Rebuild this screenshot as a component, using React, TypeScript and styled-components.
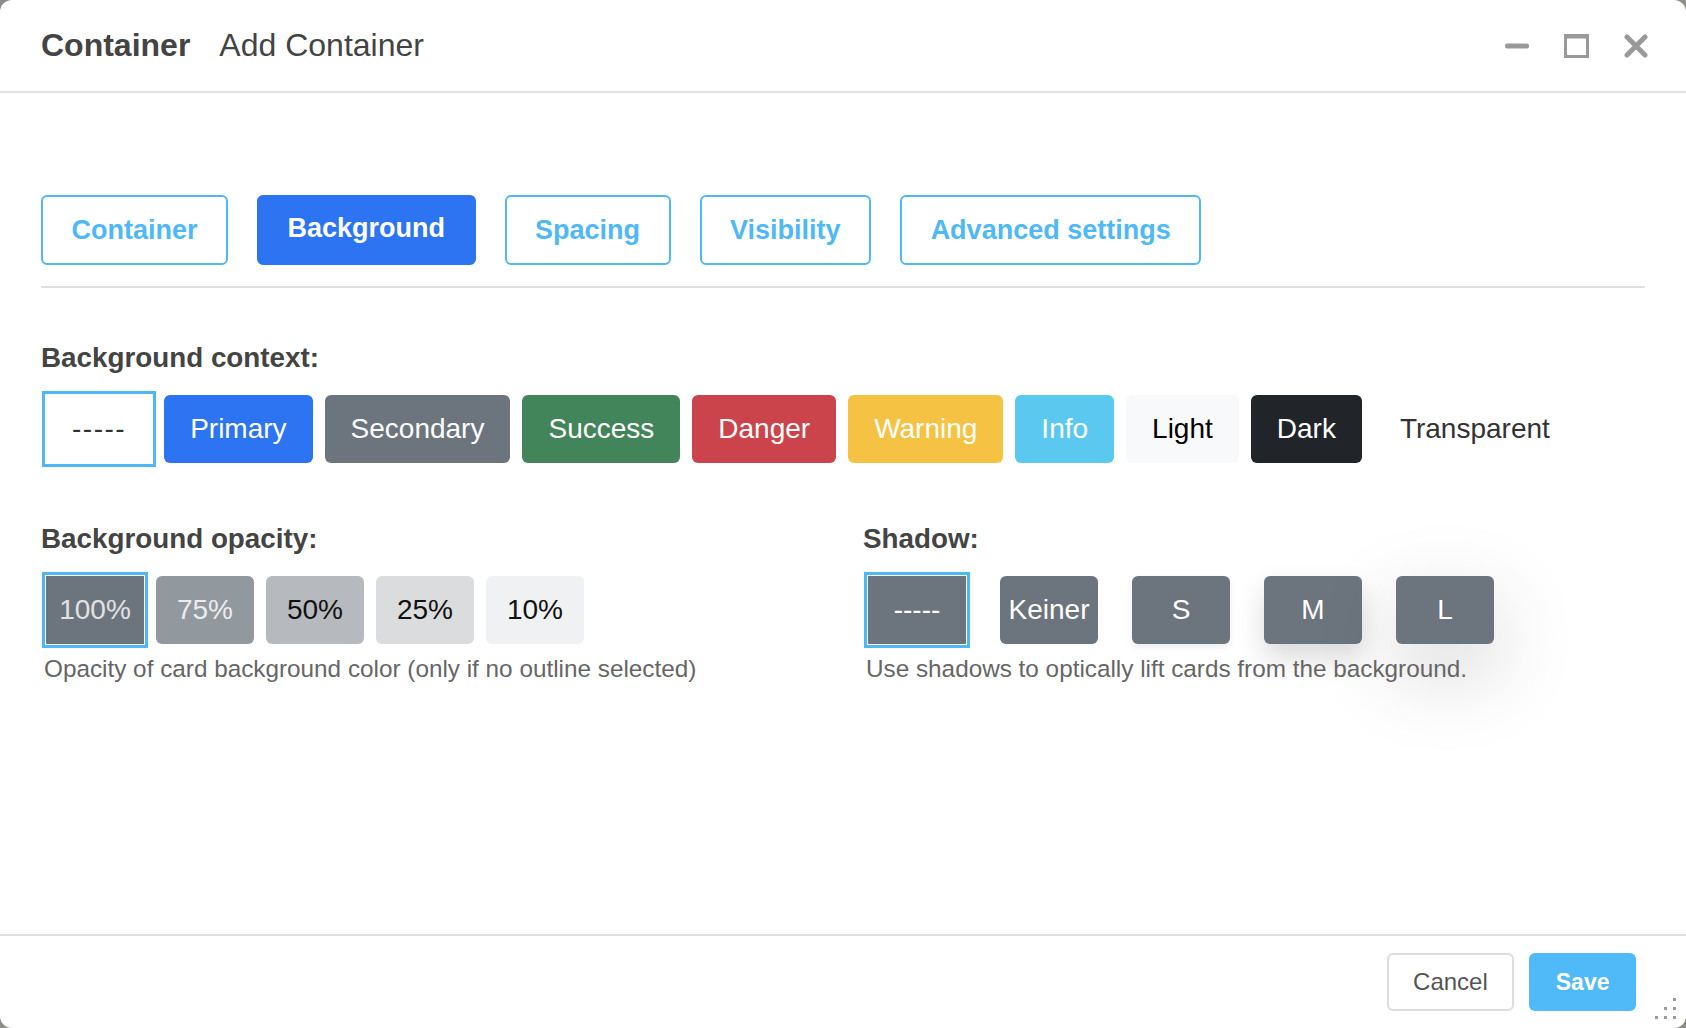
import React from 'react';
import styled, { createGlobalStyle, css } from 'styled-components';

const FONT = `"Liberation Sans", Arial, Helvetica, sans-serif`;

const Global = createGlobalStyle`
  html, body { margin: 0; padding: 0; }
  body { background: #8d8d89; font-family: ${FONT}; }
  * { box-sizing: border-box; }
`;

const Modal = styled.div`
  position: relative;
  height: 1028px;
  background: #fff;
  border-radius: 12px;
  display: flex;
  flex-direction: column;
  overflow: hidden;
`;

const Header = styled.header`
  height: 93px;
  border-bottom: 2px solid #e2e2e2;
  display: flex;
  align-items: center;
  padding: 0 38px 0 41px;
`;

const Title = styled.h1`
  margin: 0;
  font-size: 32px;
  font-weight: 700;
  color: #444;
`;

const Subtitle = styled.span`
  font-size: 32px;
  color: #444;
  margin-left: 29px;
`;

const Controls = styled.div`
  margin-left: auto;
  display: flex;
  align-items: center;
  gap: 35px;
`;

const ControlButton = styled.button`
  border: 0;
  background: none;
  padding: 0;
  display: flex;
  color: #999;
  cursor: pointer;
`;

const Body = styled.main`
  flex: 1;
  padding: 102px 41px 0;
`;

const TabBar = styled.nav`
  display: flex;
  gap: 29px;
  padding-bottom: 21px;
  border-bottom: 2px solid #e0e0e0;
`;

const Tab = styled.button<{ $active?: boolean }>`
  height: 70px;
  padding: 0 28.5px;
  border: 2px solid #4fb8f6;
  border-radius: 6px;
  background: #fff;
  color: #4fb8f6;
  font: 700 27px ${FONT};
  cursor: pointer;
  ${(p) =>
    p.$active &&
    css`
      background: #2c74f1;
      border-color: #2c74f1;
      color: #fff;
      padding-bottom: 4px;
    `}
`;

const Section = styled.section<{ $top: number }>`
  margin-top: ${(p) => p.$top}px;
`;

const Label = styled.h2`
  margin: 0 0 21px;
  font-size: 27.8px;
  line-height: 32px;
  font-weight: 700;
  color: #444;
`;

const OptionRow = styled.div<{ $gap: number }>`
  display: flex;
  align-items: center;
  gap: ${(p) => p.$gap}px;
  padding-left: 5px;
`;

const OptionButton = styled.button<{
  $bg: string;
  $fg: string;
  $width?: number;
  $shadow?: string;
  $selected?: boolean;
  $spacing?: number;
}>`
  height: 68px;
  padding: 0 26px;
  ${(p) => p.$width && css`width: ${p.$width}px; padding: 0;`}
  border: 0;
  border-radius: 6px;
  background: ${(p) => p.$bg};
  color: ${(p) => p.$fg};
  font: 400 28px ${FONT};
  letter-spacing: ${(p) => p.$spacing ?? 0}px;
  box-shadow: ${(p) => p.$shadow ?? 'none'};
  cursor: pointer;
  ${(p) =>
    p.$selected &&
    css`
      border-radius: 0;
      outline: 3px solid #4db8f5;
      outline-offset: 1px;
    `}
`;

const Columns = styled.div`
  display: grid;
  grid-template-columns: 1fr 1fr;
  column-gap: 40px;
  margin-top: 60px;
`;

const Help = styled.p`
  margin: 11px 0 0 3px;
  font-size: 24.3px;
  line-height: 28px;
  color: #666;
`;

const Footer = styled.footer`
  border-top: 2px solid #e0e0e0;
  padding: 17px 50px;
  display: flex;
  justify-content: flex-end;
  gap: 15px;
`;

const FooterButton = styled.button<{ $primary?: boolean }>`
  height: 58px;
  padding: 0 24.5px;
  border-radius: 6px;
  font: 400 24px ${FONT};
  cursor: pointer;
  ${(p) =>
    p.$primary
      ? css`
          padding: 0 26.5px;
          border: 0;
          background: #50b9f7;
          color: #fff;
          font-weight: 700;
          font-size: 23px;
        `
      : css`
          border: 2px solid #ddd;
          background: #fff;
          color: #555;
        `}
`;

const Grip = styled.svg`
  position: absolute;
  right: 8px;
  bottom: 8px;
`;

const contexts = [
  { label: '-----', bg: '#fff', fg: '#333', selected: true, spacing: 1.5 },
  { label: 'Primary', bg: '#2c74f1', fg: '#fff' },
  { label: 'Secondary', bg: '#6c757d', fg: '#fff' },
  { label: 'Success', bg: '#43855a', fg: '#fff' },
  { label: 'Danger', bg: '#cb444b', fg: '#fff' },
  { label: 'Warning', bg: '#f5c243', fg: '#fff' },
  { label: 'Info', bg: '#5bc8ef', fg: '#fff' },
  { label: 'Light', bg: '#f8f9fa', fg: '#000' },
  { label: 'Dark', bg: '#212529', fg: '#fff' },
  { label: 'Transparent', bg: 'transparent', fg: '#333' },
];

const opacities = [
  { label: '100%', bg: '#6c757d', fg: '#e2e2e2', selected: true },
  { label: '75%', bg: '#91989e', fg: '#ececec' },
  { label: '50%', bg: '#b6babe', fg: '#111' },
  { label: '25%', bg: '#dadcde', fg: '#111' },
  { label: '10%', bg: '#f0f1f2', fg: '#111' },
];

const shadows = [
  { label: '-----', shadow: 'none', selected: true },
  { label: 'Keiner', shadow: 'none' },
  { label: 'S', shadow: '0 3px 7px rgba(0,0,0,0.08)' },
  { label: 'M', shadow: '0 14px 28px rgba(0,0,0,0.15)' },
  { label: 'L', shadow: '0 28px 84px rgba(0,0,0,0.18)' },
];

const tabs = ['Container', 'Background', 'Spacing', 'Visibility', 'Advanced settings'];

export default function App() {
  return (
    <>
      <Global />
      <Modal>
        <Header>
          <Title>Container</Title>
          <Subtitle>Add Container</Subtitle>
          <Controls>
            <ControlButton aria-label="minimize">
              <svg width="24" height="24" viewBox="0 0 24 24">
                <rect x="0" y="9.5" width="24" height="5" rx="2" fill="currentColor" />
              </svg>
            </ControlButton>
            <ControlButton aria-label="maximize">
              <svg width="25" height="24" viewBox="0 0 25 24">
                <rect x="1.5" y="1.5" width="22" height="21" fill="none" stroke="currentColor" strokeWidth="3" />
                <rect x="1.5" y="1.5" width="22" height="3" fill="currentColor" />
              </svg>
            </ControlButton>
            <ControlButton aria-label="close">
              <svg width="24" height="24" viewBox="0 0 24 24">
                <path d="M3 3 L21 21 M21 3 L3 21" stroke="currentColor" strokeWidth="5" strokeLinecap="round" />
              </svg>
            </ControlButton>
          </Controls>
        </Header>

        <Body>
          <TabBar>
            {tabs.map((t) => (
              <Tab key={t} $active={t === 'Background'}>
                {t}
              </Tab>
            ))}
          </TabBar>

          <Section $top={54}>
            <Label>Background context:</Label>
            <OptionRow $gap={12}>
              {contexts.map((c) => (
                <OptionButton
                  key={c.label}
                  $bg={c.bg}
                  $fg={c.fg}
                  $selected={c.selected}
                  $spacing={c.spacing}
                >
                  {c.label}
                </OptionButton>
              ))}
            </OptionRow>
          </Section>

          <Columns>
            <div>
              <Label>Background opacity:</Label>
              <OptionRow $gap={12}>
                {opacities.map((o) => (
                  <OptionButton key={o.label} $bg={o.bg} $fg={o.fg} $width={98} $selected={o.selected}>
                    {o.label}
                  </OptionButton>
                ))}
              </OptionRow>
              <Help>Opacity of card background color (only if no outline selected)</Help>
            </div>
            <div>
              <Label>Shadow:</Label>
              <OptionRow $gap={34}>
                {shadows.map((s) => (
                  <OptionButton
                    key={s.label}
                    $bg="#6c757d"
                    $fg="#fff"
                    $width={98}
                    $shadow={s.shadow}
                    $selected={s.selected}
                  >
                    {s.label}
                  </OptionButton>
                ))}
              </OptionRow>
              <Help>Use shadows to optically lift cards from the background.</Help>
            </div>
          </Columns>
        </Body>

        <Footer>
          <FooterButton>Cancel</FooterButton>
          <FooterButton $primary>Save</FooterButton>
        </Footer>

        <Grip width="24" height="24" viewBox="0 0 24 24" fill="#9a9a9a">
          <rect x="19" y="2" width="3" height="3" />
          <rect x="10" y="11" width="3" height="3" />
          <rect x="19" y="11" width="3" height="3" />
          <rect x="1" y="20" width="3" height="3" />
          <rect x="10" y="20" width="3" height="3" />
          <rect x="19" y="20" width="3" height="3" />
        </Grip>
      </Modal>
    </>
  );
}
